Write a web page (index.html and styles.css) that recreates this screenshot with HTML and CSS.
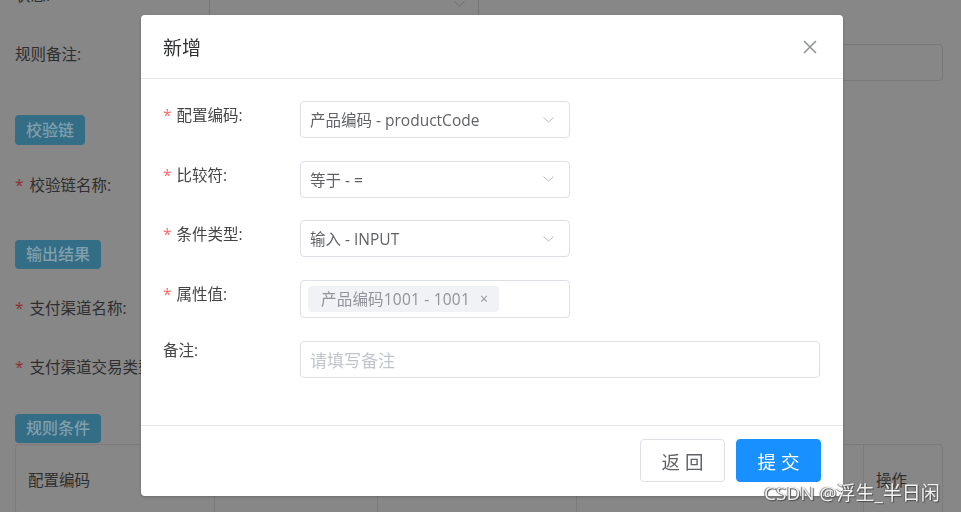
FILE: index.html
```html
<!doctype html>
<html>
  <head>
    <meta charset="utf-8">
    <title>规则配置 - 新增条件</title>
    <link rel="stylesheet" href="styles.css">
  </head>
  <body>

    <!-- page behind the dialog -->
    <div class="page">
      <div class="row first">
        <label class="lbl">状态:</label>
        <div class="box select">
          <svg class="arrow" width="11" height="6" viewBox="0 0 11 6"><polyline points="0.5,0.5 5.5,5 10.5,0.5" fill="none" stroke="#6e6f72" stroke-width="1"/></svg>
        </div>
      </div>
      <div class="row">
        <label class="lbl">规则备注:</label>
        <div class="box wide"></div>
      </div>

      <div class="badge">校验链</div>
      <div class="row">
        <label class="lbl"><i>*</i>校验链名称:</label>
        <div class="box select"></div>
      </div>

      <div class="badge out">输出结果</div>
      <div class="row">
        <label class="lbl"><i>*</i>支付渠道名称:</label>
        <div class="box select"></div>
      </div>
      <div class="row last">
        <label class="lbl"><i>*</i>支付渠道交易类型:</label>
        <div class="box select"></div>
      </div>

      <div class="badge rule">规则条件</div>
      <table class="grid">
        <tr>
          <th class="c1">配置编码</th>
          <th class="c2"></th>
          <th class="c3"></th>
          <th class="c4"></th>
          <th class="c5">操作</th>
        </tr>
      </table>
    </div>

    <!-- dialog -->
    <div class="dialog">
      <div class="dlg-head">
        <span class="dlg-title">新增</span>
        <svg class="close" width="14" height="14" viewBox="0 0 14 14"><path d="M1 1L13 13M13 1L1 13" stroke="#909399" stroke-width="1.6" fill="none"/></svg>
      </div>

      <div class="dlg-body">
        <div class="item">
          <label class="item-label"><i>*</i>配置编码:</label>
          <div class="field">
            <span>产品编码 - productCode</span>
            <svg width="11" height="6" viewBox="0 0 11 6"><polyline points="0.5,0.5 5.5,5 10.5,0.5" fill="none" stroke="#b4b8bf" stroke-width="1"/></svg>
          </div>
        </div>
        <div class="item">
          <label class="item-label"><i>*</i>比较符:</label>
          <div class="field">
            <span>等于 - =</span>
            <svg width="11" height="6" viewBox="0 0 11 6"><polyline points="0.5,0.5 5.5,5 10.5,0.5" fill="none" stroke="#b4b8bf" stroke-width="1"/></svg>
          </div>
        </div>
        <div class="item">
          <label class="item-label"><i>*</i>条件类型:</label>
          <div class="field">
            <span>输入 - INPUT</span>
            <svg width="11" height="6" viewBox="0 0 11 6"><polyline points="0.5,0.5 5.5,5 10.5,0.5" fill="none" stroke="#b4b8bf" stroke-width="1"/></svg>
          </div>
        </div>
        <div class="item">
          <label class="item-label"><i>*</i>属性值:</label>
          <div class="field tags">
            <span class="tag">产品编码1001 - 1001<b class="tag-x">×</b></span>
          </div>
        </div>
        <div class="item">
          <label class="item-label plain">备注:</label>
          <div class="field long">
            <span class="placeholder">请填写备注</span>
          </div>
        </div>
      </div>

      <div class="dlg-foot">
        <button class="btn plain">返 回</button>
        <button class="btn primary">提 交</button>
      </div>
    </div>

    <div class="mark">CSDN @浮生_半日闲</div>

  </body>
</html>
```

FILE: styles.css
```css
html, body {
  margin: 0;
  height: 100%;
}
body {
  background: #878787;
  font-family: "Open Sans", "Noto Sans CJK SC", sans-serif;
  overflow: hidden;
}

/* page behind the mask, already dimmed */
.page {
  display: flex;
  flex-direction: column;
  align-items: flex-start;
  padding: 0 18px 0 15px;
}
.row {
  align-self: stretch;
  display: flex;
  height: 37px;
  margin-bottom: 22px;
}
.row.first {
  margin-top: -15px;
}
.row.last {
  margin-bottom: 20px;
}
.lbl {
  width: 194px;
  flex: none;
  line-height: 20px;
  font-size: 15.5px;
  color: #2e2e2e;
  white-space: nowrap;
}
.lbl i {
  font-style: normal;
  color: #8a3030;
  margin-right: 6px;
}
.box {
  box-sizing: border-box;
  height: 37px;
  border: 1px solid #78797d;
  border-radius: 4px;
}
.select {
  width: 270px;
  position: relative;
}
.select .arrow {
  position: absolute;
  right: 13px;
  top: 15px;
}
.wide {
  flex: 1;
}
.badge {
  height: 30px;
  line-height: 30px;
  padding: 0 11px;
  margin: 12px 0 30px;
  border-radius: 4px;
  background: #346d86;
  color: #819fad;
  font-size: 16px;
  font-weight: 500;
}
.badge.out {
  margin: 6px 0 29px;
  height: 29px;
  line-height: 29px;
}
.badge.rule {
  margin: 0 0 1px;
  height: 29px;
  line-height: 29px;
}
.grid {
  align-self: stretch;
  border: 1px solid #7b7b7b;
  border-radius: 4px;
  border-spacing: 0;
}
.grid th {
  height: 68px;
  padding: 0 0 0 12px;
  text-align: left;
  font-weight: normal;
  font-size: 15.5px;
  color: #2e2e2e;
  border-left: 1px solid #7b7b7b;
}
.grid th.c1 { width: 186px; border-left: 0; }
.grid th.c2 { width: 150px; }
.grid th.c3 { width: 186px; }
.grid th.c4 { width: 274px; }

/* dialog */
.dialog {
  position: fixed;
  left: 141px;
  top: 15px;
  width: 702px;
  height: 481px;
  background: #fff;
  border-radius: 4px;
  display: flex;
  flex-direction: column;
  box-shadow: 0 1px 3px rgba(0,0,0,.2);
}
.dlg-head {
  height: 63px;
  flex: none;
  display: flex;
  align-items: center;
  justify-content: space-between;
  padding: 0 26px 0 22px;
  border-bottom: 1px solid #e8e8e8;
}
.dlg-title {
  font-size: 19px;
  color: #303133;
}
.dlg-body {
  flex: 1;
  padding: 22px 23px 0 22px;
}
.item {
  display: flex;
  margin-bottom: 22.5px;
}
.item-label {
  width: 137px;
  flex: none;
  line-height: 28px;
  font-size: 15.5px;
  color: #444;
}
.item-label i {
  font-style: normal;
  color: #f56c6c;
  margin-right: 5px;
}
.item-label.plain {
  line-height: 18px;
}
.field {
  box-sizing: border-box;
  width: 270px;
  height: 37px;
  border: 1px solid #dcdfe6;
  border-radius: 4px;
  display: flex;
  align-items: center;
  justify-content: space-between;
  padding: 0 15px 0 9px;
  font-size: 15.5px;
  color: #606266;
}
.field.tags {
  height: 38.5px;
  padding-left: 7px;
}
.tag {
  height: 26px;
  display: flex;
  align-items: center;
  padding: 0 11px 0 13px;
  border-radius: 4px;
  background: #f0f2f5;
  color: #909399;
  letter-spacing: 0.2px;
}
.tag-x {
  font-weight: normal;
  font-size: 14px;
  margin-left: 10px;
}
.field.long {
  width: 520px;
}
.placeholder {
  font-size: 17px;
  color: #c0c4cc;
}
.dlg-foot {
  flex: none;
  display: flex;
  justify-content: flex-end;
  gap: 11px;
  padding: 13px 22px 14px;
  border-top: 1px solid #e8e8e8;
}
.btn {
  box-sizing: border-box;
  width: 85px;
  height: 43px;
  border-radius: 4px;
  font-family: inherit;
  font-size: 18.5px;
  cursor: pointer;
}
.btn.plain {
  background: #fff;
  border: 1px solid #dcdfe6;
  color: #606266;
}
.btn.primary {
  background: #1890ff;
  border: 1px solid #1890ff;
  color: #fff;
}

/* watermark */
.mark {
  position: fixed;
  left: 764px;
  top: 478px;
  font-size: 19px;
  color: #f2f2f2;
  text-shadow: 1px 1px 1px #4a4a4a, -1px 0 1px #6a6a6a;
  white-space: nowrap;
}
```
